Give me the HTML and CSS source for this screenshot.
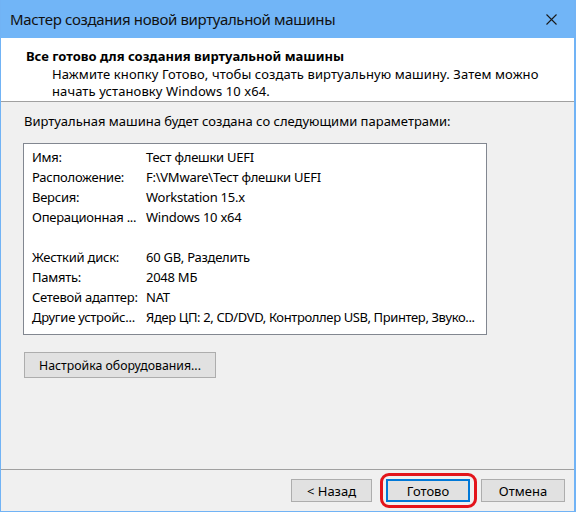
FILE: index.html
```html
<!DOCTYPE html>
<html lang="ru">
<head>
<meta charset="utf-8">
<link rel="stylesheet" href="styles.css">
</head>
<body>
<div class="window">
  <div class="titlebar">
    <span class="title">Мастер создания новой виртуальной машины</span>
    <svg class="close" width="11" height="11" viewBox="0 0 11 11"><path d="M0.5 0.5L10.5 10.5M10.5 0.5L0.5 10.5" stroke="#1a1a1a" stroke-width="1.1" fill="none"/></svg>
  </div>
  <div class="header">
    <div class="h-title">Все готово для создания виртуальной машины</div>
    <div class="h-sub">Нажмите кнопку Готово, чтобы создать виртуальную машину. Затем можно начать установку Windows 10 x64.</div>
  </div>
  <div class="body">
    <div class="intro">Виртуальная машина будет создана со следующими параметрами:</div>
    <div class="list">
      <div class="row"><span class="k">Имя:</span><span class="v">Тест флешки UEFI</span></div>
      <div class="row"><span class="k">Расположение:</span><span class="v">F:\VMware\Тест флешки UEFI</span></div>
      <div class="row"><span class="k">Версия:</span><span class="v">Workstation 15.x</span></div>
      <div class="row"><span class="k">Операционная ...</span><span class="v">Windows 10 x64</span></div>
      <div class="row"></div>
      <div class="row"><span class="k">Жесткий диск:</span><span class="v">60 GB, Разделить</span></div>
      <div class="row"><span class="k">Память:</span><span class="v">2048 МБ</span></div>
      <div class="row"><span class="k">Сетевой адаптер:</span><span class="v">NAT</span></div>
      <div class="row"><span class="k">Другие устройс...</span><span class="v tight">Ядер ЦП: 2, CD/DVD, Контроллер USB, Принтер, Звуко...</span></div>
    </div>
    <button class="btn hw">Настройка оборудования...</button>
  </div>
  <div class="footer">
    <button class="btn fb back">&lt; Назад</button>
    <span class="focus-ring"><button class="btn fb primary">Готово</button></span>
    <button class="btn fb cancel">Отмена</button>
  </div>
</div>
</body>
</html>
```
FILE: styles.css
```css
html, body {
  margin: 0;
  padding: 0;
}
body {
  width: 576px;
  height: 512px;
  overflow: hidden;
  font-family: "Noto Sans", "Open Sans", sans-serif;
  font-size: 13px;
  color: #000;
}
.window {
  width: 576px;
  height: 512px;
  box-sizing: border-box;
  border-left: 1px solid #71b3f5;
  border-right: 2px solid #71b3f5;
  border-bottom: 1px solid #71b3f5;
  display: flex;
  flex-direction: column;
  background: #f0f0f0;
}
.titlebar {
  height: 38px;
  flex: none;
  background: #71b5f7;
  display: flex;
  align-items: center;
  justify-content: space-between;
  padding: 0 17px 0 9px;
}
.title {
  font-size: 15px;
  color: #111;
  letter-spacing: -0.35px;
}
.close {
  display: block;
}
.header {
  height: 63px;
  flex: none;
  background: #fff;
  border-bottom: 1px solid #a0a0a0;
}
.h-title {
  font-weight: bold;
  font-size: 13px;
  margin: 10px 0 0 25px;
  line-height: 16px;
}
.h-sub {
  margin: 2px 0 0 51px;
  width: 510px;
  line-height: 17px;
  letter-spacing: 0.1px;
}
.body {
  flex: 1;
  padding: 11px 0 0 22px;
}
.intro {
  line-height: 16px;
  margin-left: 1px;
}
.list {
  margin-top: 14px;
  width: 462px;
  height: 187px;
  background: #fff;
  border: 1px solid #828790;
  padding: 3px 0 0 0;
  letter-spacing: -0.25px;
}
.row {
  height: 20px;
  display: flex;
  align-items: center;
  white-space: nowrap;
  overflow: hidden;
}
.k {
  width: 114px;
  padding-left: 8px;
  flex: none;
}
.tight {
  letter-spacing: -0.38px;
}
.btn {
  font-family: inherit;
  font-size: 13px;
  color: #000;
  background: #e1e1e1;
  border: 1px solid #adadad;
  padding: 0;
  margin: 0;
  box-sizing: border-box;
}
.hw {
  margin-top: 17px;
  width: 192px;
  height: 26px;
  margin-left: 1px;
  font-size: 12.3px;
}
.footer {
  height: 41px;
  flex: none;
  border-top: 1px solid #a0a0a0;
  display: flex;
  align-items: center;
  justify-content: flex-end;
  padding-right: 9px;
}
.fb {
  height: 23px;
}
.back {
  width: 81px;
}
.cancel {
  width: 84px;
}
.primary {
  border: 2px solid #0078d7;
  width: 84px;
}
.focus-ring {
  border: 3px solid #e3141b;
  border-radius: 9px;
  padding: 3px 4px 3px 3px;
  margin: 0 4px 0 8px;
  display: flex;
}
```
